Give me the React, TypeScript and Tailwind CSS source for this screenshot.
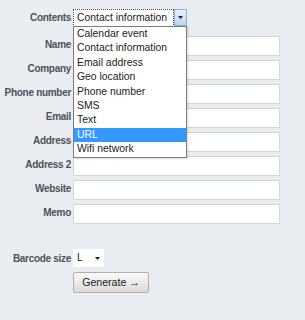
import React from "react";

const labelCls =
  "w-[73px] shrink-0 pr-[2px] pt-[3px] text-right text-[10px] leading-[12px] font-bold tracking-[-0.3px] text-[#4b525a] whitespace-nowrap";

const fields = ["Name", "Company", "Phone number", "Email", "Address", "Address 2", "Website", "Memo"];

const options = [
  "Calendar event",
  "Contact information",
  "Email address",
  "Geo location",
  "Phone number",
  "SMS",
  "Text",
  "URL",
  "Wifi network",
];

function Tri() {
  return (
    <svg width="5" height="3" viewBox="0 0 5 3">
      <path d="M0 0H5L2.5 3Z" fill="#1f1f1f" />
    </svg>
  );
}

export default function App() {
  return (
    <div
      className="relative w-[305px] h-[320px] bg-[#e9edf2] pt-[9px]"
      style={{ fontFamily: '"Liberation Sans", Arial, sans-serif' }}
    >
      <div className="flex h-[18px]">
        <div className={labelCls}>Contents</div>
        <div className="flex h-[18px] w-[114px] bg-white">
          <div className="flex-1 border border-dotted border-[#4a4a4a] bg-white pl-[3px] text-[10.4px] leading-[16px] text-[#222]">
            Contact information
          </div>
          <div className="flex w-[13px] h-[17px] items-center justify-center border border-[#8eb1d3] bg-gradient-to-b from-[#e6f1fb] to-[#bcd7f0]">
            <Tri />
          </div>
        </div>
      </div>

      <div className="mt-[9px] flex flex-col gap-[4px]">
        {fields.map((f) => (
          <div key={f} className="flex h-[20px]">
            <div className={labelCls}>{f}</div>
            <div className="w-[207px] h-[20px] border border-[#d2d7dd] bg-white" />
          </div>
        ))}
      </div>

      <div className="mt-[25px] flex h-[18px]">
        <div className={labelCls + " pt-[4px]"}>Barcode size</div>
        <div className="flex w-[31px] h-[18px] items-center justify-between bg-white pl-[4px] pr-[4px] text-[10.4px] text-[#222]">
          <span>L</span>
          <Tri />
        </div>
      </div>

      <div className="mt-[5px] flex">
        <div className="w-[73px] shrink-0" />
        <button className="h-[21px] w-[76px] rounded-[2px] border border-[#b0b0b0] bg-gradient-to-b from-[#fbfbfb] to-[#dadada] text-[10.6px] leading-[19px] text-[#1c1c1c]">
          Generate →
        </button>
      </div>

      <div className="absolute left-[73px] top-[26px] w-[114px] border border-[#7d7d7d] bg-white shadow-[1px_1px_2px_rgba(0,0,0,0.15)]">
        {options.map((o) => (
          <div
            key={o}
            className={
              "h-[14.4px] pl-[3px] text-[10.4px] leading-[14.4px] whitespace-nowrap " +
              (o === "URL" ? "bg-[#3399ff] text-white" : "text-[#222]")
            }
          >
            {o}
          </div>
        ))}
      </div>
    </div>
  );
}
